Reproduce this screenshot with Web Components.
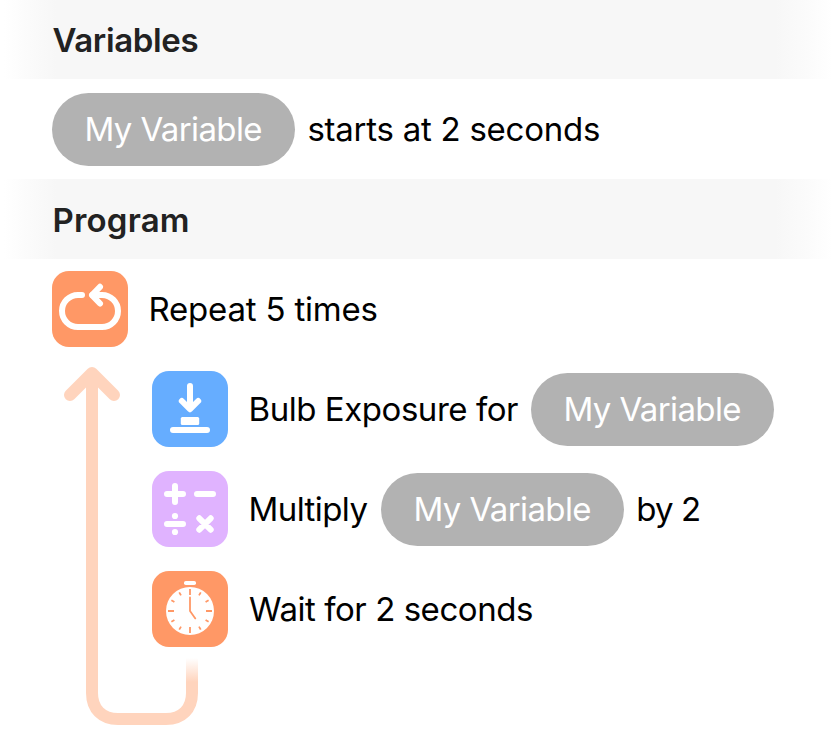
<!DOCTYPE html>
<html lang="en">
<head>
<meta charset="utf-8">
<title>Program</title>
<style>
body{margin:0;background:#fff;font-family:Inter,"Liberation Sans",sans-serif;font-size:33px;color:#000}
</style>
</head>
<body>
<program-view></program-view>
<script>
const define=(name,html,setup)=>customElements.define(name,class extends HTMLElement{
  connectedCallback(){
    if(this.shadowRoot)return;
    const t=document.createElement('template');
    t.innerHTML=html;
    const root=this.attachShadow({mode:'open'});
    root.append(t.content.cloneNode(true));
    if(setup)setup(this,root);
  }
});

define('section-title',`<style>
:host{display:flex;align-items:center;box-sizing:border-box;height:80px;padding-left:52.5px;color:#222;font-weight:600;line-height:40px;white-space:nowrap;
background:linear-gradient(90deg,#fff 4px,#fbfbfb 29px,#f8f8f8 50px,#f7f7f7 56px,#f7f7f7 776px,#f8f8f8 782px,#fbfbfb 807px,#fff 832px)}
</style><slot></slot>`);

define('variable-pill',`<style>
:host{display:flex;flex:none;align-items:center;box-sizing:border-box;width:243px;height:73px;padding-left:32.5px;border-radius:37px;background:#b2b2b2;color:#fff;letter-spacing:-.63px;white-space:nowrap}
</style><slot></slot>`);

define('row-text',`<style>
:host{display:block;flex:none;line-height:40px;white-space:nowrap}
</style><slot></slot>`);

define('program-row',`<style>
:host{display:flex;align-items:center;box-sizing:border-box;height:100px;padding-left:52px}
:host([nested]){padding-left:152px}
</style><slot></slot>`);

const icons={
repeat:['#ff9866',`<g class="s"><path d="M30 24H26a16 16 0 0 0 0 32H50a16 16 0 0 0 0-32H40.3"/><path d="M48 15.8L40 24.1L48 32.5"/></g>`],
bulb:['#66adff',`<g class="s"><path d="M38 15V37.5M29.8 30L38 38.2L46.2 30M21 59H55"/></g><rect x="28.8" y="46" width="18.4" height="8" rx="1.6"/>`],
math:['#e0b3ff',`<g class="s"><path d="M15 23H31M23 15V31M45 23H61M15 53H31M47.3 47.3L58.7 58.7M58.7 47.3L47.3 58.7"/></g><circle cx="23" cy="45" r="3.1"/><circle cx="23" cy="61" r="3.1"/>`],
timer:['#ff9866',`<rect x="32" y="10" width="12" height="4" rx="1.8"/><circle cx="38" cy="40" r="24"/><g fill="none" stroke="#ff9866" stroke-width="1.8"><path d="M38 18V24M38 56V62M16 40H22M54 40H60"/>${[30,60,120,150,210,240,300,330].map(a=>`<path d="M38 18.5V22" transform="rotate(${a} 38 40)"/>`).join('')}<path d="M38 26.5V40L43.3 47.4" stroke-linecap="round" stroke-linejoin="round"/></g>`]
};
define('action-icon',`<style>
:host{display:block;flex:none;width:76px;height:76px;margin-right:20.5px;border-radius:17px;overflow:hidden}
svg{display:block;fill:#fff}
.s{fill:none;stroke:#fff;stroke-width:6;stroke-linecap:round;stroke-linejoin:round}
</style><svg width="76" height="76" viewBox="0 0 76 76"></svg>`,(host,root)=>{
  const [color,art]=icons[host.getAttribute('name')];
  host.style.background=color;
  root.querySelector('svg').innerHTML=art;
});

define('loop-arrow',`<style>
:host{position:absolute;left:60px;top:100px;width:144px;height:372px}
svg{display:block}
</style><svg width="144" height="372" viewBox="60 359 144 372" fill="none" stroke-width="12" stroke-linejoin="round">
<defs><linearGradient id="fade" gradientUnits="userSpaceOnUse" x1="0" y1="658" x2="0" y2="682"><stop offset="0" stop-color="#ffd4bd" stop-opacity="0"/><stop offset="1" stop-color="#ffd4bd"/></linearGradient></defs>
<path stroke="#ffd4bd" d="M92 373V693C92 709 102 719 118 719H166C182 719 192 709 192 693V682"/>
<path stroke="#ffd4bd" stroke-linecap="round" d="M70 395L92 373L114 395"/>
<rect x="186" y="658" width="12" height="24" fill="url(#fade)" stroke="none"/>
</svg>`);

define('program-loop',`<style>
:host{display:block;position:relative}
</style><slot></slot><loop-arrow></loop-arrow>`);

define('program-view',`<style>
:host{display:block;width:840px;height:750px;overflow:hidden}
.first{height:79px;padding-top:1px}
.start{padding-top:1px}
.start>*{padding-bottom:1px}
</style>
<section-title class="first" style="letter-spacing:-.36px">Variables</section-title>
<program-row class="start"><variable-pill>My Variable</variable-pill><row-text style="margin-left:12.4px;letter-spacing:-.25px">starts at 2 seconds</row-text></program-row>
<section-title style="padding-top:1px;letter-spacing:.2px">Program</section-title>
<program-loop>
<program-row><action-icon name="repeat"></action-icon><row-text style="letter-spacing:-.2px">Repeat 5 times</row-text></program-row>
<program-row nested><action-icon name="bulb"></action-icon><row-text style="width:282.5px;letter-spacing:-.45px">Bulb Exposure for</row-text><variable-pill>My Variable</variable-pill></program-row>
<program-row nested><action-icon name="math"></action-icon><row-text style="width:132.5px;letter-spacing:-.58px">Multiply</row-text><variable-pill>My Variable</variable-pill><row-text style="margin-left:12.2px;letter-spacing:-.86px">by 2</row-text></program-row>
<program-row nested><action-icon name="timer"></action-icon><row-text style="padding-left:.5px;letter-spacing:-.45px">Wait for 2 seconds</row-text></program-row>
</program-loop>`);
</script>
</body>
</html>
